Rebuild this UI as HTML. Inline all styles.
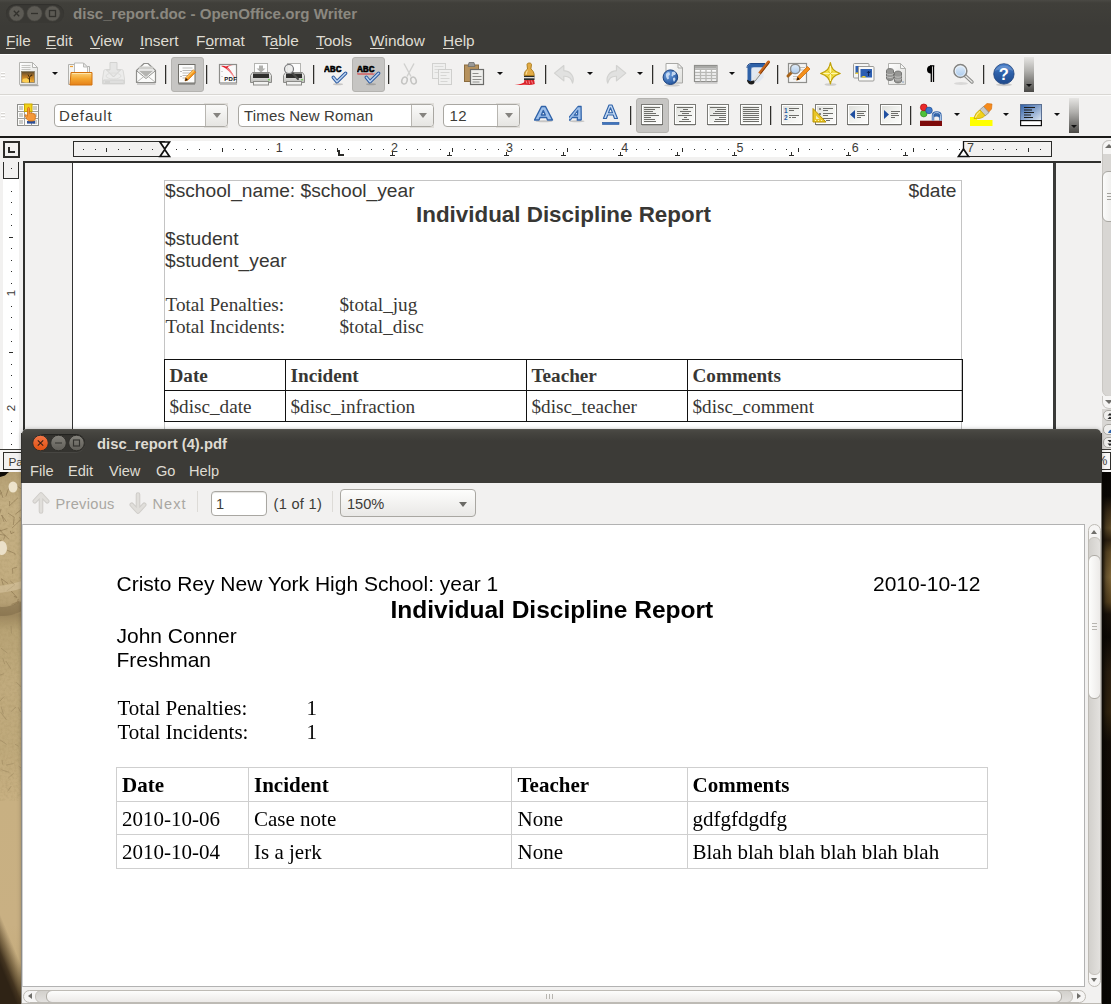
<!DOCTYPE html>
<html>
<head>
<meta charset="utf-8">
<title>disc_report</title>
<style>
*{box-sizing:border-box;margin:0;padding:0}
html,body{width:1111px;height:1004px;overflow:hidden}
body{font-family:"Liberation Sans",sans-serif;position:relative;background:#3a2a17}
.abs{position:absolute}
.nw{white-space:nowrap}
/* ---------- wallpaper ---------- */
#wallL{left:0;top:471px;width:22px;height:533px}
#wallR{left:1102px;top:472px;width:9px;height:532px;background:linear-gradient(90deg,rgba(8,6,3,.85) 0,rgba(8,6,3,.25) 45%,rgba(8,6,3,0) 100%),linear-gradient(180deg,#070503 0,#0a0704 24px,#3d2e18 40px,#5f4b28 56px,#2e2110 68px,#5f4a25 80px,#7f6638 105px,#58431f 130px,#1b130a 142px,#0d0905 165px,#2a1e0f 200px,#33250f 240px,#120c06 270px,#080603 532px)}
/* ---------- writer window ---------- */
#writer{left:0;top:0;width:1111px;height:471px;background:#f2f1f0}
#wtitle{left:0;top:0;width:1111px;height:27px;background:linear-gradient(180deg,#4a4944 0,#403f3a 3px,#3c3b37 100%)}
#wmenu{left:0;top:27px;width:1111px;height:27px;background:#3c3b37}
.wm{top:4px;color:#dfdbd2;font-size:15.4px;line-height:19px}
.wm u{text-decoration-thickness:1px;text-underline-offset:2px}
#tb1{left:0;top:54px;width:1111px;height:40px;background:#f2f1f0;box-shadow:inset 0 1px 0 #fff}
#tb2{left:0;top:94px;width:1111px;height:42px;background:#f2f1f0;box-shadow:inset 0 1px 0 #d9d7d3,inset 0 2px 0 #fbfbfa}
#tbline{left:0;top:136px;width:1111px;height:2px;background:#1a1a18}
.sep{width:1px;height:18px;background:#3c3b37}
.pressed{background:#c6c5c3;border:1px solid #b4b3b0;border-radius:3px}
.dd{width:0;height:0;border-left:3px solid transparent;border-right:3px solid transparent;border-top:3px solid #111}
.combo{height:23px;border:1px solid #a9a7a2;border-radius:4px;background:#fff;top:104px}
.combo .t{position:absolute;left:5px;top:2px;font-size:15px;line-height:18px;color:#3c3b37;white-space:nowrap}
.combo .b{position:absolute;right:0;top:0;width:22px;height:21px;border-left:1px solid #b8b6b1;background:linear-gradient(180deg,#fafaf9,#e6e5e2);border-radius:0 3px 3px 0}
.combo .b i{position:absolute;left:7px;top:8px;width:0;height:0;border-left:4px solid transparent;border-right:4px solid transparent;border-top:5px solid #85837f}
#ruler{left:0;top:0;width:1111px;height:0}
.rn{top:142px;font-size:12.5px;line-height:13px;color:#3c3b37;width:8px;text-align:center;background:transparent}
#wdoc{left:0;top:161px;width:1111px;height:288px;background:#f2f1f0;overflow:hidden}
#wdoc .frameT{left:23px;top:0;width:1078px;height:2px;background:#2f2f2d}
#wdoc .frameL{left:23px;top:0;width:2px;height:290px;background:#2f2f2d}
#wdoc .page{left:72px;top:2px;width:984px;height:288px;background:#fff;border-left:1px solid #333;border-right:3px solid #3a3a38}
#vr{left:3px;top:1px;width:16px;height:289px;background:#fff}
#vr .mb{left:0;top:0;width:16px;height:17px;background:#f2f1f0;border:1px solid #2b2b29;border-top:0}
.wt{color:#383734;white-space:nowrap;position:absolute}
.sans{font-family:"Liberation Sans",sans-serif}
.serif{font-family:"Liberation Serif",serif}
.tf{border:1px solid #c4c4c4}
.bl{background:#111;position:absolute}
#wsb{left:1101px;top:138px;width:10px;height:311px;background:#f2f1f0;overflow:hidden}
#wstatus{left:0;top:449px;width:1111px;height:23px;background:#f7f6f5;box-shadow:inset 0 1px 0 #3c3b37}
/* ---------- pdf window ---------- */
#pdf{left:22px;top:429px;width:1079px;height:575px;background:#f2f1f0;border-radius:5px 5px 0 0;overflow:hidden;box-shadow:0 1px 5px rgba(0,0,0,.38)}
#ptitle{left:0;top:0;width:1079px;height:29px;background:linear-gradient(180deg,#5a5954 0,#4b4a45 1px,#45443f 4px,#3c3b37 12px,#3c3b37 100%);box-shadow:inset 0 -1px 0 #32312d}
#pmenu{left:0;top:28px;width:1079px;height:26px;background:#3c3b37}
.pm{top:5px;color:#dfdbd2;font-size:14.6px;line-height:18px}
#ptool{left:0;top:54px;width:1079px;height:42px;background:#f2f1f0}
.pt{position:absolute;white-space:nowrap;font-size:14.6px;line-height:18px;top:12px}
#pview{filter:grayscale(1);left:0;top:95px;width:1063px;height:463px;background:#fff;border:1px solid #b5b2ab;border-left:1px solid #d4d2cd}
.pp{color:#000;white-space:nowrap;position:absolute}
.gl{background:#cfcfcf;position:absolute}
#pvs{left:1066px;top:95px;width:13px;height:463px;border:1px solid #bebbb5;border-radius:7px;background:#f6f5f4;overflow:hidden}
#phs{left:1px;top:561px;width:1063px;height:13px;border:1px solid #bebbb5;border-radius:7px;background:#f6f5f4;overflow:hidden}
</style>
</head>
<body>
<svg id="wallL" class="abs" width="22" height="533" viewBox="0 0 22 533">
<defs><linearGradient id="wl" x1="0" y1="0" x2="0" y2="1">
<stop offset="0" stop-color="#b39e72"/><stop offset=".06" stop-color="#c4af83"/><stop offset=".2" stop-color="#c3ad80"/><stop offset=".245" stop-color="#b7a176"/><stop offset=".27" stop-color="#9d875e"/><stop offset=".3" stop-color="#b8a375"/><stop offset=".4" stop-color="#c1ab7e"/><stop offset=".52" stop-color="#bfa97b"/><stop offset=".62" stop-color="#c8b082"/><stop offset=".85" stop-color="#c9b083"/><stop offset="1" stop-color="#c2a978"/></linearGradient>
<linearGradient id="wd" gradientUnits="userSpaceOnUse" x1="19.500" y1="489.500" x2="1.500" y2="497"><stop offset="0" stop-color="#5a4830" stop-opacity="0"/><stop offset=".4" stop-color="#564428" stop-opacity=".6"/><stop offset=".75" stop-color="#3d2e1b" stop-opacity=".95"/><stop offset="1" stop-color="#2f2315"/></linearGradient>
<filter id="nz" x="0" y="0" width="100%" height="100%"><feTurbulence type="fractalNoise" baseFrequency=".35" numOctaves="2" seed="3"/><feColorMatrix values="0 0 0 0 .36  0 0 0 0 .27  0 0 0 0 .12  0 0 0 .9 -.36"/></filter></defs>
<rect width="22" height="533" fill="url(#wl)"/>
<rect width="22" height="330" filter="url(#nz)" opacity=".7"/>
<path d="M5.8 25.5L8.5 17.8L9.0 15.9 M-0.6 71.5L-8.9 70.3L-15.0 64.5 M8.2 112.7L1.4 107.7L3.2 114.0 M11.9 57.2L20.4 49.0L25.4 46.1 M1.5 21.2L-2.0 26.9L-6.5 28.0 M13.3 54.0L14.2 46.2L8.0 42.1 M14.3 61.2L11.0 62.7L10.3 59.9 M17.1 96.2L12.5 97.5L12.8 102.8 M15.5 43.1L24.1 36.3L23.0 39.9 M1.6 69.1L-6.6 72.1L-2.9 73.1 M19.0 46.5L22.5 48.2L23.6 47.6 M18.2 127.9L17.7 130.8L11.5 133.6 M13.5 134.1L19.3 130.2L17.7 132.6 M-1.5 65.6L-7.4 58.7L-13.6 62.4 M1.1 37.9L-0.9 44.6L-6.7 43.9 M11.2 120.0L16.9 126.5L13.8 125.3 M6.6 120.1L14.8 113.8L10.3 110.0 M3.6 68.6L5.2 64.3L-1.7 63.2 M6.9 79.1L15.0 82.5L15.2 84.1 M14.2 13.0L21.4 18.0L26.7 22.2 M7.4 57.5L0.3 59.9L-5.8 53.8 M3.0 26.9L0.1 18.9L-6.9 14.0 M0.4 52.9L-8.1 59.6L-6.5 54.7 M4.1 50.8L1.6 44.0L6.5 50.9 M9.2 68.4L1.7 61.3L-0.5 58.0 M17.9 26.8L9.3 34.9L9.7 30.0" stroke="#7a6440" stroke-width=".9" fill="none" opacity=".5"/>
<path d="M11.0 154.9L11.5 162.5 M18.7 275.3L14.9 273.2 M2.0 288.9L2.5 293.4 M5.9 190.1L10.9 197.9 M18.5 295.1L23.6 298.9 M3.4 243.2L1.1 235.6 M-1.3 200.3L-5.2 203.4 M21.0 230.5L27.9 238.3 M20.9 215.6L16.4 211.3 M2.7 186.8L4.7 193.2 M18.2 236.3L20.6 241.1 M0.0 268.9L6.6 273.4 M16.0 236.0L10.9 240.7 M6.0 294.1L13.5 292.5 M7.6 320.4L11.2 315.1 M1.0 177.2L7.5 182.1 M1.5 298.8L9.2 301.3 M6.4 248.8L0.5 241.0 M21.3 266.9L21.7 273.9 M8.4 306.9L13.6 302.3 M4.0 202.7L-0.1 204.1 M4.2 225.4L-1.7 232.0" stroke="#8c7752" stroke-width="1" fill="none" opacity=".4"/>
<path d="M-2 140c8 2 16-1 26-6" stroke="#7f6b48" stroke-width="9" fill="none" opacity=".55"/>
<path d="M-2 118c8 1 16 -2 26 -5" stroke="#d8c7a2" stroke-width="7" fill="none" opacity=".55"/>
<ellipse cx="13" cy="16" rx="4.500" ry="5.500" fill="#efe6d0" opacity=".95"/><ellipse cx="2" cy="77" rx="5" ry="7" fill="#efe6d0" opacity=".9"/>
<path d="M0 0h11c-3 1-4 3-6 4.500l-5 1.500z" fill="#0d0a06"/>
<rect x="0" y="430" width="22" height="103" fill="url(#wd)"/>
</svg>
<div id="wallR" class="abs"></div>

<!-- ================= WRITER WINDOW ================= -->
<div id="writer" class="abs">
  <div id="wtitle" class="abs">
    <div class="abs" style="left:6px;top:4px;width:58px;height:19px;border-radius:9.500px;background:#393834;box-shadow:inset 0 1px 1px rgba(0,0,0,.15)"></div>
    <svg class="abs" style="left:6px;top:4px" width="58" height="20" viewBox="0 0 58 20">
      <g fill="#5c5a54" stroke="#4a4843" stroke-width=".6"><circle cx="10.5" cy="9.5" r="7.5"/><circle cx="28.5" cy="9.5" r="7.5"/><circle cx="46.5" cy="9.5" r="7.5"/></g>
      <g stroke="#32312d" stroke-width="1.3" fill="none"><path d="M7.8 6.8l5.4 5.4M13.2 6.8l-5.4 5.4"/><path d="M25 9.5h7"/><rect x="43.5" y="6.5" width="6" height="6"/></g>
    </svg>
    <div class="abs nw" style="left:73px;top:4px;font-size:15.1px;font-weight:bold;line-height:20px;color:#8b8880">disc_report.doc - OpenOffice.org Writer</div>
  </div>
  <div id="wmenu" class="abs">
    <div class="abs nw wm" style="left:6px"><u>F</u>ile</div>
    <div class="abs nw wm" style="left:46px"><u>E</u>dit</div>
    <div class="abs nw wm" style="left:90px"><u>V</u>iew</div>
    <div class="abs nw wm" style="left:140px"><u>I</u>nsert</div>
    <div class="abs nw wm" style="left:196px">F<u>o</u>rmat</div>
    <div class="abs nw wm" style="left:262px">T<u>a</u>ble</div>
    <div class="abs nw wm" style="left:316px"><u>T</u>ools</div>
    <div class="abs nw wm" style="left:370px"><u>W</u>indow</div>
    <div class="abs nw wm" style="left:443px"><u>H</u>elp</div>
  </div>
  <div id="tb1" class="abs"><!--TB1--><svg width="0" height="0" style="position:absolute"><defs>
<linearGradient id="gPage" x1="0" y1="0" x2="1" y2="1"><stop offset="0" stop-color="#ffffff"/><stop offset="1" stop-color="#dededb"/></linearGradient>
<linearGradient id="gFold" x1="0" y1="0" x2="0" y2="1"><stop offset="0" stop-color="#fbd27a"/><stop offset=".5" stop-color="#f4a630"/><stop offset="1" stop-color="#e5811a"/></linearGradient>
<linearGradient id="gSun" x1="0" y1="0" x2="0" y2="1"><stop offset="0" stop-color="#5b4a30"/><stop offset=".45" stop-color="#b97a26"/><stop offset="1" stop-color="#f7b233"/></linearGradient>
<linearGradient id="gBlue" x1="0" y1="0" x2="0" y2="1"><stop offset="0" stop-color="#5c93d6"/><stop offset="1" stop-color="#1f4f94"/></linearGradient>
<linearGradient id="gEnd" x1="0" y1="0" x2="0" y2="1"><stop offset="0" stop-color="#e3e2e0"/><stop offset=".35" stop-color="#a9a8a5"/><stop offset="1" stop-color="#3e3d3a"/></linearGradient>
<linearGradient id="gPrn" x1="0" y1="0" x2="0" y2="1"><stop offset="0" stop-color="#f4f4f3"/><stop offset="1" stop-color="#bdbdba"/></linearGradient>
<linearGradient id="gHelp" x1="0" y1="0" x2="0" y2="1"><stop offset="0" stop-color="#4a82cf"/><stop offset=".5" stop-color="#2c5ea6"/><stop offset="1" stop-color="#1f4a8c"/></linearGradient>
<radialGradient id="gGlobe" cx=".35" cy=".3" r=".8"><stop offset="0" stop-color="#6ea0e0"/><stop offset="1" stop-color="#1d4e96"/></radialGradient>
<linearGradient id="gLens" x1="0" y1="0" x2="0" y2="1"><stop offset="0" stop-color="#e4effa"/><stop offset="1" stop-color="#a9c9ec"/></linearGradient>
<linearGradient id="gPage2" x1="0" y1="0" x2="1" y2="1"><stop offset="0" stop-color="#dfe0dc"/><stop offset=".5" stop-color="#f1f2ef"/><stop offset="1" stop-color="#fbfbfa"/></linearGradient>
<linearGradient id="gBg" x1="0" y1="0" x2="1" y2="1"><stop offset="0" stop-color="#2f5fa6"/><stop offset="1" stop-color="#dfe8f3"/></linearGradient>
</defs></svg>
<div class="abs" style="left:1px;top:18px;width:4px;height:7px;background:repeating-linear-gradient(180deg,#ffffff 0,#ffffff 1px,#d8d6d2 1px,#d8d6d2 2px,transparent 2px,transparent 3px)"></div>
<svg class="abs" style="left:18px;top:7px" width="22" height="26" viewBox="0 0 22 26" >
<path d="M2 24.500h18.500" stroke="#6f6f6c" stroke-width="1.400" opacity=".55"/>
<path d="M1.500 1.500h13l5 5v17h-18z" fill="url(#gPage)" stroke="#b4b4b1"/>
<path d="M14.500 1.500v5h5z" fill="#fafaf9" stroke="#b4b4b1" stroke-linejoin="round"/>
<path d="M3.500 4.500h9M3.500 6.500h9M3.500 8.500h9" stroke="#c4c4c1" stroke-width="1"/>
<rect x="3.500" y="10.500" width="13" height="11" fill="url(#gSun)" stroke="#8a8068" stroke-width=".8"/>
<ellipse cx="8.500" cy="19.500" rx="4" ry="2.200" fill="#ffd45a" opacity=".9"/>
<path d="M11.500 21.500v-5l-1.500-3M11.500 16.500l2-3M11.500 18.500l-2-1.500M12.800 14.800l1.500-.5" stroke="#3a2810" stroke-width=".9" fill="none"/></svg>
<div class="abs dd" style="left:51.5px;top:18.0px"></div>
<svg class="abs" style="left:67px;top:7px" width="27" height="26" viewBox="0 0 27 26" >
<path d="M1.500 3.500h8l1.500 2h11.500v18h-21z" fill="#f4f4f2" stroke="#b1b1ae"/>
<path d="M3 5.500h3" stroke="#f0a030" stroke-width="1.200"/>
<path d="M7.500 2h9l4 4v16h-13z" fill="#fefefe" stroke="#bbbbb8"/>
<path d="M16.500 2v4h4z" fill="#ececea" stroke="#bbbbb8" stroke-linejoin="round"/>
<path d="M4 11.500h21v12.500h-22z" fill="url(#gFold)" stroke="#d2720e"/>
<path d="M5 12.500h19" stroke="#fde6ad" stroke-width="1"/></svg>
<svg class="abs" style="left:101px;top:7px" width="25" height="25" viewBox="0 0 25 25" >
<path d="M4.500 8.500h16c1 0 1.500 .5 1.700 1.500l1.300 8v5h-22v-5l1.300-8c.2-1 .7-1.500 1.700-1.500z" fill="#ececeb" stroke="#d9d9d7"/>
<path d="M9 1.500h7v7.500h3.500l-7 7-7-7h3.500z" fill="#e6e6e5" stroke="#d3d3d1"/>
<ellipse cx="12.500" cy="15" rx="7.500" ry="3" fill="none" stroke="#dededc" stroke-width="1"/>
<rect x="2" y="19" width="21" height="3.500" rx="1" fill="#dfdfde" stroke="#d2d2d0"/>
<path d="M4 21h5" stroke="#c9c9c7" stroke-width="1"/></svg>
<svg class="abs" style="left:134px;top:7px" width="24" height="24" viewBox="0 0 24 24" >
<path d="M3 23h18.500" stroke="#6f6f6c" stroke-width="1.200" opacity=".45"/>
<path d="M2.500 9.500l7.500-7h4l7.500 7v12h-19z" fill="#fbfbfa" stroke="#8f8f8c" stroke-width="1.200" stroke-linejoin="round"/>
<path d="M4.500 9.500h15l-7.500 6.500z" fill="#b4b4b1"/>
<path d="M5.500 5.500h13l1 3h-15z" fill="#cfcfcc"/>
<path d="M4.500 9h15" stroke="#e9e9e7" stroke-width="1.400"/>
<path d="M3 10l9 7.500 9-7.500" fill="none" stroke="#8f8f8c" stroke-width="1"/>
<path d="M3 21l7.500-6M21 21l-7.500-6" stroke="#b9b9b6" stroke-width="1"/></svg>
<div class="abs" style="left:165px;top:11px;width:1px;height:19px;background:#2f2e2b;box-shadow:1px 0 0 rgba(47,46,43,.25)"></div>
<div class="abs pressed" style="left:171px;top:3px;width:33px;height:35px"></div>
<svg class="abs" style="left:176px;top:8px" width="24" height="24" viewBox="0 0 24 24" >
<path d="M2.500 22h16.500" stroke="#55544f" stroke-width="1.400" opacity=".55"/>
<rect x="2.500" y="2.500" width="16.500" height="18.500" fill="#fcfcfb" stroke="#6f6e69" stroke-width="1"/>
<path d="M6.500 6h10M6.500 8.500h10M6.500 11h8M6.500 13.500h6M6.500 16h5" stroke="#bdbdba" stroke-width="1"/>
<path d="M4.500 9.500h1M4.500 14.500h1" stroke="#777" stroke-width="1"/>
<path d="M17.300 7.800l2.400 2.400-7.700 7.700-3 1 .8-3.200z" fill="#f59a1c" stroke="#d56f06" stroke-width=".8"/>
<path d="M17.300 7.800l1.200 1.200-7.700 7.700-1-.8z" fill="#fbc15a"/>
<path d="M9 19l.8-3.200 2.200 2.200z" fill="#2b1a08"/></svg>
<div class="abs" style="left:206px;top:11px;width:1px;height:19px;background:#2f2e2b;box-shadow:1px 0 0 rgba(47,46,43,.25)"></div>
<svg class="abs" style="left:217px;top:8px" width="23" height="24" viewBox="0 0 23 24" >
<rect x="2.500" y="2.500" width="17" height="18.500" fill="#fafafa" stroke="#8d8d8a" stroke-width="1.200"/>
<path d="M4.500 9.500h1M4.500 14.500h1" stroke="#aaa" stroke-width="1"/>
<path d="M4 4c4 1.500 9 5 13.500 11.500-2.500-5.500-5-8.500-7-10.500 2-1 4-1.700 6.500-2-4 .2-6.500 .8-8 1.500-1.500-.6-3-1-5-.5z" fill="#e2202a"/>
<path d="M10 6c2.500 2.500 5 6 7.500 9.500" stroke="#f6a0a4" stroke-width="1.600" fill="none" opacity=".7"/>
<text x="7.300" y="19.300" font-family="Liberation Sans" font-weight="bold" font-size="6" fill="#111" letter-spacing=".3">PDF</text>
<path d="M3 22.500h17" stroke="#8d8d8a" stroke-width="1" opacity=".5"/></svg>
<svg class="abs" style="left:249px;top:8px" width="24" height="24" viewBox="0 0 24 24" >
<rect x="5.500" y="1.500" width="13" height="10" fill="#fdfdfd" stroke="#b4b4b1"/>
<path d="M10 3.500h4v3h2.500l-4.500 4-4.500-4h2.500z" fill="#b0b0ad"/>
<path d="M3.500 10.500h17l2 3v7h-21v-7z" fill="url(#gPrn)" stroke="#8b8b88"/>
<rect x="4" y="11.500" width="16" height="4.500" fill="#2f2f2d"/>
<rect x="4.500" y="19.500" width="15" height="3.500" fill="#f1f1f0" stroke="#8b8b88"/>
<rect x="19.300" y="17" width="1.400" height="1.400" fill="#5fd13c"/></svg>
<svg class="abs" style="left:282px;top:8px" width="24" height="24" viewBox="0 0 24 24" >
<rect x="5.500" y="1.500" width="13" height="10" fill="#fdfdfd" stroke="#b4b4b1"/>
<path d="M3.500 10.500h17l2 3v7h-21v-7z" fill="url(#gPrn)" stroke="#8b8b88"/>
<rect x="4" y="11.500" width="16" height="4.500" fill="#2f2f2d"/>
<rect x="4.500" y="19.500" width="15" height="3.500" fill="#f1f1f0" stroke="#8b8b88"/>
<rect x="19.300" y="17" width="1.400" height="1.400" fill="#5fd13c"/>
<path d="M9.500 10l6.500 7" stroke="#4b4b49" stroke-width="2" stroke-linecap="round"/>
<circle cx="7" cy="7" r="4.500" fill="#ebebea" fill-opacity=".9" stroke="#77777a" stroke-width="1.200"/></svg>
<div class="abs" style="left:313px;top:11px;width:1px;height:19px;background:#2f2e2b;box-shadow:1px 0 0 rgba(47,46,43,.25)"></div>
<svg class="abs" style="left:324px;top:7px" width="24" height="25" viewBox="0 0 24 25" ><text x="0" y="10.800" font-family="Liberation Mono" font-weight="bold" font-size="9.800" fill="#000" textLength="17.500" lengthAdjust="spacingAndGlyphs" stroke="#000" stroke-width=".5">ABC</text><path d="M9.300 16.300l3.700 4.500 8.600-8.600" fill="none" stroke="#2c5aa0" stroke-width="3.400" stroke-linecap="round" stroke-linejoin="round"/><path d="M9.300 16.300l3.700 4.500 8.600-8.600" fill="none" stroke="#bcd4f1" stroke-width="1.500" stroke-linecap="round" stroke-linejoin="round"/><ellipse cx="14" cy="23.300" rx="5" ry="1" fill="#000" opacity=".18"/></svg>
<div class="abs pressed" style="left:352px;top:3px;width:33px;height:35px"></div>
<svg class="abs" style="left:357px;top:7px" width="24" height="25" viewBox="0 0 24 25" ><text x="0" y="10.800" font-family="Liberation Mono" font-weight="bold" font-size="9.800" fill="#000" textLength="17.500" lengthAdjust="spacingAndGlyphs" stroke="#000" stroke-width=".5">ABC</text><path d="M0 13.500l1-1 1 1 1-1 1 1 1-1 1 1 1-1 1 1 1-1 1 1 1-1 1 1 1-1 1 1 1-1 1 1 1-1" stroke="#e0141c" stroke-width="1" fill="none"/><path d="M9.300 16.300l3.700 4.500 8.600-8.600" fill="none" stroke="#2c5aa0" stroke-width="3.400" stroke-linecap="round" stroke-linejoin="round"/><path d="M9.300 16.300l3.700 4.500 8.600-8.600" fill="none" stroke="#bcd4f1" stroke-width="1.500" stroke-linecap="round" stroke-linejoin="round"/><ellipse cx="14" cy="23.300" rx="5" ry="1" fill="#000" opacity=".18"/></svg>
<div class="abs" style="left:388px;top:11px;width:1px;height:19px;background:#2f2e2b;box-shadow:1px 0 0 rgba(47,46,43,.25)"></div>
<svg class="abs" style="left:399px;top:7px" width="20" height="26" viewBox="0 0 20 26" >
<path d="M5 2.500l7 13M15 2.500l-7 13" stroke="#d0d0ce" stroke-width="1.400" fill="none"/>
<ellipse cx="5.500" cy="19.500" rx="2.600" ry="3.600" fill="none" stroke="#c4c4c2" stroke-width="1.500" transform="rotate(20 5.500 19.500)"/>
<ellipse cx="14.500" cy="19.500" rx="2.600" ry="3.600" fill="none" stroke="#c4c4c2" stroke-width="1.500" transform="rotate(-20 14.500 19.500)"/></svg>
<svg class="abs" style="left:430px;top:7px" width="24" height="26" viewBox="0 0 24 26" >
<rect x="2.500" y="2.500" width="13" height="15" fill="#efefee" stroke="#d2d2d0"/>
<path d="M4.500 5.500h9M4.500 8.500h9M4.500 11.500h9" stroke="#dadad8"/>
<rect x="8.500" y="8.500" width="13" height="15" fill="#f0f0ef" stroke="#cfcfcd"/>
<path d="M10.500 11.500h9M10.500 14.500h6M10.500 17.500h9M10.500 20.500h7" stroke="#d6d6d4"/></svg>
<svg class="abs" style="left:462px;top:7px" width="24" height="26" viewBox="0 0 24 26" >
<rect x="2.500" y="4" width="14" height="16.500" fill="#b6925e" stroke="#8b6c3e"/>
<path d="M7 1.500h5l1 4h-7z" fill="#9a9a98" stroke="#6e6e6c" stroke-width=".8"/>
<rect x="8.500" y="8.500" width="13" height="15" fill="#eeeeec" stroke="#6b6b69" stroke-width="1.200"/>
<path d="M10.500 12.500h6M10.500 15.500h9M10.500 18.500h9M10.500 21h7" stroke="#8e8e8c" stroke-width="1.200"/></svg>
<div class="abs dd" style="left:496.5px;top:18.0px"></div>
<svg class="abs" style="left:512px;top:7px" width="26" height="26" viewBox="0 0 26 26" >
<path d="M2.500 24c5-.5 9-1.500 12-4l8 .5c-3 2.500-10 4-20 3.500z" fill="#e51c23"/>
<path d="M12.500 18.500h9.500l.8 4.500c-4 1.500-8 1.300-11 0z" fill="#d8222a"/>
<path d="M14 19.500l1 3M17 19.500l.5 3.500M19.500 19.500l1 3" stroke="#f7a3a6" stroke-width=".8"/>
<rect x="12" y="14.500" width="10.500" height="4.500" fill="#2a2a28"/>
<path d="M12 16.700h10.500" stroke="#f2f2f0" stroke-width="1.200"/>
<path d="M15 3.500c0-2 4.500-2 4.500 0l-.6 4.500c2 1.500 3.300 3.500 3.300 6.500h-10c0-3 1.300-5 3.300-6.500z" fill="#e2ab45" stroke="#a87818" stroke-width=".9"/>
<path d="M15.500 9.500c-.8 1-1.300 2.500-1.300 4" stroke="#f8dc98" stroke-width="1.200" fill="none"/></svg>
<div class="abs" style="left:545px;top:11px;width:1px;height:19px;background:#2f2e2b;box-shadow:1px 0 0 rgba(47,46,43,.25)"></div>
<svg class="abs" style="left:553px;top:9px" width="24" height="22" viewBox="0 0 24 22" ><g transform="translate(.3 .3) scale(1.17 1.1)"><path d="M9 2l-8 7 8 7v-4.200c4-.3 6.500 1.800 7.500 6.200 1.800-5-1-10.800-7.500-11.300z" fill="#e1e1e0" stroke="#d2d2d0" stroke-width="1" stroke-linejoin="round"/></g></svg>
<div class="abs dd" style="left:587.4px;top:18.0px"></div>
<svg class="abs" style="left:604px;top:9px" width="24" height="22" viewBox="0 0 24 22" ><g transform="translate(23 .3) scale(-1.17 1.1)"><path d="M9 2l-8 7 8 7v-4.200c4-.3 6.500 1.800 7.500 6.200 1.800-5-1-10.800-7.500-11.300z" fill="#e1e1e0" stroke="#d2d2d0" stroke-width="1" stroke-linejoin="round"/></g></svg>
<div class="abs dd" style="left:637.2px;top:18.0px"></div>
<div class="abs" style="left:652px;top:11px;width:1px;height:19px;background:#2f2e2b;box-shadow:1px 0 0 rgba(47,46,43,.25)"></div>
<svg class="abs" style="left:661px;top:7px" width="24" height="26" viewBox="0 0 24 26" >
<path d="M5 2.500h12l4.500 4.500v15h-16.500z" fill="url(#gPage)" stroke="#a9a9a6"/>
<path d="M17 2.500v4.500h4.500z" fill="#f7f7f6" stroke="#a9a9a6" stroke-linejoin="round"/>
<ellipse cx="11" cy="24.300" rx="8" ry="1.200" fill="#000" opacity=".15"/>
<circle cx="9.400" cy="16.200" r="7.300" fill="url(#gGlobe)" stroke="#1b4280" stroke-width="1"/>
<path d="M5 13c1-1.500 2.500-2 3.500-1.500l.5 2-1.500 1.500.5 2.500-1.500 1c-1-1.500-2-3.500-1.500-5.500zM11 11l2.500-.5 1.500 2-1 1.500h-1.500l-.5 1.500-1.500-.5zM12 17l2-.5.500 2-1.500 2.500-1-2z" fill="#cfe0f5" opacity=".9"/></svg>
<svg class="abs" style="left:693px;top:10px" width="26" height="20" viewBox="0 0 26 20" >
<rect x="1.500" y="1.500" width="22.500" height="16" fill="#fdfdfd" stroke="#8f8f8c" stroke-width="1.200"/>
<rect x="2" y="2" width="21.500" height="2.600" fill="#a9a9a6"/>
<path d="M2 5.300h21.500M2 8.500h21.500M2 11.500h21.500M2 14.500h21.500M7.500 5v12.500M13 5v12.500M18.500 5v12.500" stroke="#b9b9b6" stroke-width="1.300"/>
<path d="M2 19h22.500" stroke="#777" stroke-width="1" opacity=".5"/></svg>
<div class="abs dd" style="left:728.6px;top:18.0px"></div>
<svg class="abs" style="left:744px;top:6px" width="27" height="27" viewBox="0 0 27 27" >
<path d="M7 4h14.500v3.500h-11.500c-1.500 0-2.500 1-2.500 2.500v11.500h-4v-13.500c0-2.500 1.500-4 3.500-4z" fill="#2f62a8"/>
<path d="M3 8c0-2.500 1.500-4.500 4-4.500h14" fill="none" stroke="#1d4686" stroke-width="1"/>
<path d="M7.500 7.500h12v10l-5 5h-7z" fill="#dfe7f1" opacity=".9"/>
<path d="M24.500 2l-9 11.500" stroke="#c8651a" stroke-width="3" stroke-linecap="round"/>
<path d="M25.300 2.500l-8.500 11" stroke="#7a3d0f" stroke-width="1"/>
<path d="M15.500 13.500l-5.500 7" stroke="#e3e3e1" stroke-width="3.200"/>
<path d="M16.500 14.200l-5.500 7" stroke="#8a8a88" stroke-width="1"/>
<path d="M10.500 20.500c-2 0-3.500 1-5 .5-1.500-.4-2-1.500-2.500-1 .2 2.500 2 4.500 4.500 4.500 2.200 0 3.500-1.500 3-4z" fill="#1c1c1b"/></svg>
<div class="abs" style="left:777px;top:11px;width:1px;height:19px;background:#2f2e2b;box-shadow:1px 0 0 rgba(47,46,43,.25)"></div>
<svg class="abs" style="left:785px;top:7px" width="27" height="24" viewBox="0 0 27 24" >
<rect x="3.500" y="2.500" width="18" height="19" fill="#f6f6f5" stroke="#8f8f8c" stroke-width="1.200"/>
<path d="M14 6.500h6M14 9h6M8 15.500h8M8 18h6" stroke="#c2c2bf" stroke-width="1"/>
<path d="M7 11l-4 4" stroke="#a8641a" stroke-width="3" stroke-linecap="round"/>
<circle cx="10.200" cy="7.900" r="4.700" fill="url(#gLens)" stroke="#8d8d8a" stroke-width="1.400"/>
<path d="M22.500 5.500l2.500 2.500-10 10-3.300 1.200 1-3.500z" fill="#f4901a" stroke="#d16a06" stroke-width=".8"/>
<path d="M11.700 19.200l1-3.200 2.200 2.200z" fill="#2b1a08"/></svg>
<svg class="abs" style="left:818px;top:7px" width="25" height="26" viewBox="0 0 25 26" >
<ellipse cx="12.500" cy="23.500" rx="6" ry="1.300" fill="#000" opacity=".15"/>
<path d="M12.400 1.500c1 6 3 8.800 9.800 11-6.800 2.200-8.800 5-9.800 10.300-1-5.300-3-8.100-9.800-10.300 6.800-2.200 8.800-5 9.800-11z" fill="#f4e04a" stroke="#bfa008" stroke-width="1.200" stroke-linejoin="round"/>
<path d="M12.400 5v15M5.500 12.500h14" stroke="#fff7b0" stroke-width="1.200"/>
<path d="M12.400 12.500l3-3M12.400 12.500l-3 3M12.400 12.500l3 3M12.400 12.500l-3-3" stroke="#d8bc20" stroke-width=".8"/></svg>
<svg class="abs" style="left:851px;top:7px" width="25" height="22" viewBox="0 0 25 22" >
<rect x="2.500" y="2.500" width="15.500" height="14.500" rx="1" fill="#f5f5f4" stroke="#9a9a97"/>
<rect x="4.500" y="5" width="6" height="8" fill="#2d5fb2"/>
<path d="M4.500 11.500h4v1.500h-4z" fill="#f0d030"/>
<rect x="7.500" y="5.500" width="15.500" height="14.500" rx="1" fill="#f9f9f8" stroke="#9a9a97"/>
<rect x="9.500" y="8" width="11.500" height="8.500" fill="#2d5fb2"/>
<path d="M10 16.500c1.500-2 4-2 5.500 0z" fill="#f5d52a"/>
<path d="M17.500 15v-5M15.800 11.300h3.500M17.500 12.500l1.700-2" stroke="#0f2350" stroke-width=".9"/></svg>
<svg class="abs" style="left:885px;top:7px" width="23" height="25" viewBox="0 0 23 25" >
<path d="M3.500 2.500h12l5 5v16h-17z" fill="url(#gPage)" stroke="#b0b0ad"/>
<path d="M15.500 2.500v5h5z" fill="#f7f7f6" stroke="#b0b0ad" stroke-linejoin="round"/>
<g fill="#979795" stroke="#6c6c6a" stroke-width=".9">
<path d="M1.500 9.500c0-2.500 7-2.500 7 0v8c0 2.500-7 2.500-7 0z"/><path d="M9.500 12c0-2.500 7-2.500 7 0v8c0 2.500-7 2.500-7 0z"/></g>
<path d="M1.500 12.200c0 2 7 2 7 0M1.500 15c0 2 7 2 7 0M9.500 14.700c0 2 7 2 7 0M9.500 17.500c0 2 7 2 7 0" fill="none" stroke="#c6c6c4" stroke-width=".9"/>
<rect x="17.500" y="20.500" width="1" height="1" fill="#3465a4"/></svg>
<svg class="abs" style="left:925px;top:10px" width="12" height="20" viewBox="0 0 12 20" ><path d="M8.500 2v16M6.300 2v16" stroke="#000" stroke-width="1.300"/><path d="M6.500 1.800h-1.300c-4.300 0-4.300 7.600 0 7.600h1.300z" fill="#000"/><path d="M5 1.800h4.300" stroke="#000" stroke-width="1.200"/></svg>
<svg class="abs" style="left:950px;top:7px" width="26" height="26" viewBox="0 0 26 26" >
<ellipse cx="11" cy="22.500" rx="7" ry="1.500" fill="#000" opacity=".1"/>
<path d="M15 14.500l7 6.500" stroke="#8a8a88" stroke-width="3.400" stroke-linecap="round"/>
<path d="M15 14.500l7 6.500" stroke="#e8e8e6" stroke-width="1.400" stroke-linecap="round"/>
<circle cx="10.400" cy="10" r="6.400" fill="url(#gLens)" stroke="#858583" stroke-width="1.600"/>
<circle cx="10.400" cy="10" r="5.200" fill="none" stroke="#fff" stroke-width=".8" opacity=".8"/></svg>
<div class="abs" style="left:983px;top:11px;width:1px;height:19px;background:#2f2e2b;box-shadow:1px 0 0 rgba(47,46,43,.25)"></div>
<svg class="abs" style="left:992px;top:7px" width="24" height="26" viewBox="0 0 24 26" >
<ellipse cx="12" cy="23.800" rx="8" ry="1.500" fill="#000" opacity=".15"/>
<circle cx="11.900" cy="12.900" r="10.200" fill="url(#gHelp)" stroke="#1b3f7a" stroke-width=".8"/>
<path d="M2.500 10c3-7 16-7 19 0-6-2.500-13-2.500-19 0z" fill="#fff" opacity=".18"/>
<text x="11.900" y="18.600" text-anchor="middle" font-family="Liberation Sans" font-weight="bold" font-size="16.500" fill="#fff">?</text></svg>
<div class="abs" style="left:1024px;top:3px;width:10px;height:35px;background:linear-gradient(180deg,#e6e5e3 0,#b1b0ad 40%,#4a4946 100%)"></div>
<div class="abs dd" style="left:1026px;top:30px"></div><!--/TB1--></div>
  <div id="tb2" class="abs"><!--TB2--><div class="abs" style="left:1px;top:18px;width:4px;height:7px;background:repeating-linear-gradient(180deg,#ffffff 0,#ffffff 1px,#d8d6d2 1px,#d8d6d2 2px,transparent 2px,transparent 3px)"></div>
<svg class="abs" style="left:16px;top:9px" width="24" height="24" viewBox="0 0 24 24" >
<rect x="1.500" y="1.500" width="21" height="21" fill="#fcfcfb" stroke="#8e8e8b"/>
<path d="M8.500 1.500v21M15.500 1.500v21M1.500 8.500h21M1.500 15.500h21" stroke="#9e9e9b" stroke-width="1"/>
<g fill="#cbcbc7"><rect x="3" y="3" width="4" height="4"/><rect x="17" y="3" width="4" height="4"/><rect x="3" y="10" width="4" height="4"/><rect x="17" y="10" width="4" height="4"/><rect x="3" y="17" width="4" height="4"/><rect x="17" y="17" width="4" height="4"/></g>
<rect x="8.500" y="1" width="7.500" height="7.500" fill="#f2d21c" stroke="#c9a800"/>
<rect x="11" y="18" width="8" height="2.600" fill="#2a4f9a"/>
<path d="M11.500 5.500c0-1.500 2-1.500 2 0v5l1-.7c.6-.3 1.200 0 1.200.7l1-.3c.6 0 1 .3 1 1l.8 0c.6 0 .8.500.8 1v3.300c0 1.700-1.300 2.500-3 2.500h-2.500c-1.500 0-2.300-.8-3.300-2.500l-1.500-2.700c-.4-.9.600-1.500 1.300-.8l1.200 1.200z" fill="#f4983a" stroke="#d36d0c" stroke-width=".8"/></svg>
<div class="abs" style="left:204px;top:9px;width:24px;height:25px;background:#e0deda"></div><div class="abs combo" style="left:54px;top:10px;width:174px"><div class="t" style="left:4px;letter-spacing:0.85px">Default</div><div class="b"><i></i></div></div>
<div class="abs" style="left:410px;top:9px;width:24px;height:25px;background:#e0deda"></div><div class="abs combo" style="left:238px;top:10px;width:196px"><div class="t" style="left:5px;letter-spacing:0.15px">Times New Roman</div><div class="b"><i></i></div></div>
<div class="abs" style="left:496px;top:9px;width:24px;height:25px;background:#e0deda"></div><div class="abs combo" style="left:443px;top:10px;width:77px"><div class="t" style="left:5.5px;letter-spacing:0.3px">12</div><div class="b"><i></i></div></div>
<svg class="abs" style="left:534px;top:11px" width="21" height="18" viewBox="0 0 21 18" ><ellipse cx="10" cy="16.300" rx="8.500" ry="1" fill="#000" opacity=".18"/><path d="M7.500 1.500h4l7 13.500h-5l-1-2.500h-6.500l-1 2.500h-4.500zM9.300 5.500l-2 4.500h4z" fill="#9dbfea" stroke="#2f62a8" stroke-width="1.400" stroke-linejoin="round" fill-rule="evenodd"/></svg>
<svg class="abs" style="left:569px;top:11px" width="21" height="18" viewBox="0 0 21 18" ><ellipse cx="8" cy="16.300" rx="7.500" ry="1" fill="#000" opacity=".18"/><g transform="translate(3.500 0) skewX(-22) scale(.8 1)"><path d="M7.500 1.500h4l7 13.500h-5l-1-2.500h-6.500l-1 2.500h-4.500zM9.300 5.500l-2 4.500h4z" fill="#9dbfea" stroke="#2f62a8" stroke-width="1.400" stroke-linejoin="round" fill-rule="evenodd"/></g></svg>
<svg class="abs" style="left:601px;top:10px" width="20" height="22" viewBox="0 0 20 22" ><path d="M8 1h3l5.500 13.500h-3l-1.300-3.500h-5.500l-1.300 3.500h-3zM9.500 3.800l-2 5h4z" fill="#c2d8f2" stroke="#2f62a8" stroke-width="1.100" stroke-linejoin="round" fill-rule="evenodd"/><rect x="1.500" y="18.300" width="16.500" height="2.200" fill="#3f74bd" stroke="#2a5aa0" stroke-width=".6"/></svg>
<div class="abs" style="left:630px;top:12px;width:1px;height:19px;background:#2f2e2b;box-shadow:1px 0 0 rgba(47,46,43,.25)"></div>
<div class="abs pressed" style="left:636px;top:4px;width:33px;height:35px"></div>
<svg class="abs" style="left:641px;top:10px" width="22" height="22" viewBox="0 0 22 22" shape-rendering="crispEdges"><rect x="0.500" y="0.500" width="21" height="20" fill="#fff" stroke="#7b7b77" stroke-width="1"/><rect x="2" y="2" width="18" height="17" fill="url(#gPage2)"/><rect x="0" y="20" width="22" height="1" fill="#6f6f6b"/><rect x="1" y="21" width="20" height="1" fill="#000" opacity=".12"/><rect x="3" y="3" width="16" height="1" fill="#6e6e6a"/><rect x="3" y="5" width="11" height="1" fill="#6e6e6a"/><rect x="3" y="7" width="9" height="1" fill="#6e6e6a"/><rect x="3" y="9" width="12" height="1" fill="#6e6e6a"/><rect x="3" y="11" width="15" height="1" fill="#6e6e6a"/><rect x="3" y="13" width="7" height="1" fill="#6e6e6a"/><rect x="3" y="15" width="11" height="1" fill="#6e6e6a"/><rect x="3" y="17" width="12" height="1" fill="#6e6e6a"/></svg>
<svg class="abs" style="left:674px;top:10px" width="22" height="22" viewBox="0 0 22 22" shape-rendering="crispEdges"><rect x="0.500" y="0.500" width="21" height="20" fill="#fff" stroke="#7b7b77" stroke-width="1"/><rect x="2" y="2" width="18" height="17" fill="url(#gPage2)"/><rect x="0" y="20" width="22" height="1" fill="#6f6f6b"/><rect x="1" y="21" width="20" height="1" fill="#000" opacity=".12"/><rect x="3" y="3" width="16" height="1" fill="#6e6e6a"/><rect x="9" y="5" width="5" height="1" fill="#6e6e6a"/><rect x="6" y="7" width="11" height="1" fill="#6e6e6a"/><rect x="8" y="9" width="7" height="1" fill="#6e6e6a"/><rect x="4" y="11" width="14" height="1" fill="#6e6e6a"/><rect x="10" y="13" width="3" height="1" fill="#6e6e6a"/><rect x="8" y="15" width="7" height="1" fill="#6e6e6a"/><rect x="5" y="17" width="12" height="1" fill="#6e6e6a"/></svg>
<svg class="abs" style="left:707px;top:10px" width="22" height="22" viewBox="0 0 22 22" shape-rendering="crispEdges"><rect x="0.500" y="0.500" width="21" height="20" fill="#fff" stroke="#7b7b77" stroke-width="1"/><rect x="2" y="2" width="18" height="17" fill="url(#gPage2)"/><rect x="0" y="20" width="22" height="1" fill="#6f6f6b"/><rect x="1" y="21" width="20" height="1" fill="#000" opacity=".12"/><rect x="3" y="3" width="16" height="1" fill="#6e6e6a"/><rect x="10" y="5" width="9" height="1" fill="#6e6e6a"/><rect x="8" y="7" width="11" height="1" fill="#6e6e6a"/><rect x="6" y="9" width="13" height="1" fill="#6e6e6a"/><rect x="3" y="11" width="16" height="1" fill="#6e6e6a"/><rect x="12" y="13" width="7" height="1" fill="#6e6e6a"/><rect x="8" y="15" width="11" height="1" fill="#6e6e6a"/><rect x="7" y="17" width="12" height="1" fill="#6e6e6a"/></svg>
<svg class="abs" style="left:740px;top:10px" width="22" height="22" viewBox="0 0 22 22" shape-rendering="crispEdges"><rect x="0.500" y="0.500" width="21" height="20" fill="#fff" stroke="#7b7b77" stroke-width="1"/><rect x="2" y="2" width="18" height="17" fill="url(#gPage2)"/><rect x="0" y="20" width="22" height="1" fill="#6f6f6b"/><rect x="1" y="21" width="20" height="1" fill="#000" opacity=".12"/><rect x="3" y="3" width="16" height="1" fill="#6e6e6a"/><rect x="3" y="5" width="16" height="1" fill="#6e6e6a"/><rect x="3" y="7" width="16" height="1" fill="#6e6e6a"/><rect x="3" y="9" width="16" height="1" fill="#6e6e6a"/><rect x="3" y="11" width="16" height="1" fill="#6e6e6a"/><rect x="3" y="13" width="16" height="1" fill="#6e6e6a"/><rect x="3" y="15" width="16" height="1" fill="#6e6e6a"/><rect x="3" y="17" width="16" height="1" fill="#6e6e6a"/></svg>
<div class="abs" style="left:770px;top:12px;width:1px;height:19px;background:#2f2e2b;box-shadow:1px 0 0 rgba(47,46,43,.25)"></div>
<svg class="abs" style="left:781px;top:10px" width="22" height="22" viewBox="0 0 22 22" shape-rendering="crispEdges"><rect x="0.500" y="0.500" width="21" height="20" fill="#fff" stroke="#7b7b77" stroke-width="1"/><rect x="2" y="2" width="18" height="17" fill="url(#gPage2)"/><rect x="0" y="20" width="22" height="1" fill="#6f6f6b"/><rect x="1" y="21" width="20" height="1" fill="#000" opacity=".12"/><rect x="8" y="4" width="10" height="1" fill="#6e6e6a"/><rect x="8" y="6" width="5" height="1" fill="#6e6e6a"/><rect x="8" y="11" width="10" height="1" fill="#6e6e6a"/><rect x="8" y="13" width="2" height="1" fill="#6e6e6a"/><rect x="11" y="13" width="4" height="1" fill="#6e6e6a"/><g shape-rendering="geometricPrecision"><text x="3" y="8.500" font-family="Liberation Sans" font-weight="bold" font-size="6.500" fill="#2a5aa0">1</text><text x="3" y="15.500" font-family="Liberation Sans" font-weight="bold" font-size="6.500" fill="#2a5aa0">2</text></g></svg>
<svg class="abs" style="left:815px;top:10px" width="22" height="22" viewBox="0 0 22 22" shape-rendering="crispEdges"><rect x="0.500" y="0.500" width="21" height="20" fill="#fff" stroke="#7b7b77" stroke-width="1"/><rect x="2" y="2" width="18" height="17" fill="url(#gPage2)"/><rect x="0" y="20" width="22" height="1" fill="#6f6f6b"/><rect x="1" y="21" width="20" height="1" fill="#000" opacity=".12"/><rect x="8" y="4" width="10" height="1" fill="#6e6e6a"/><rect x="8" y="6" width="5" height="1" fill="#6e6e6a"/><rect x="8" y="9" width="10" height="1" fill="#6e6e6a"/><rect x="8" y="11" width="5" height="1" fill="#6e6e6a"/><rect x="8" y="14" width="10" height="1" fill="#6e6e6a"/><rect x="11" y="16" width="4" height="1" fill="#6e6e6a"/><rect x="4" y="4" width="2" height="2" fill="#888"/><rect x="4" y="9" width="2" height="2" fill="#888"/></svg>
<svg class="abs" style="left:812px;top:13px" width="16" height="16" viewBox="0 0 16 16" ><path d="M1 1.500v13.500h13z" fill="#e9c526" stroke="#b89200" stroke-width="1"/><path d="M4 8.500v3.500h3.500z" fill="#f6eebc"/><path d="M3 13.500h1M6 13.500h1M9 13.500h1" stroke="#fff5b0" stroke-width="1"/></svg>
<svg class="abs" style="left:847px;top:10px" width="22" height="22" viewBox="0 0 22 22" shape-rendering="crispEdges"><rect x="0.500" y="0.500" width="21" height="20" fill="#fff" stroke="#7b7b77" stroke-width="1"/><rect x="2" y="2" width="18" height="17" fill="url(#gPage2)"/><rect x="0" y="20" width="22" height="1" fill="#6f6f6b"/><rect x="1" y="21" width="20" height="1" fill="#000" opacity=".12"/><rect x="10" y="7" width="9" height="1" fill="#6e6e6a"/><rect x="10" y="9" width="7" height="1" fill="#6e6e6a"/><rect x="10" y="11" width="8" height="1" fill="#6e6e6a"/><rect x="10" y="13" width="4" height="1" fill="#6e6e6a"/><path d="M8 6v9l-5-4.500z" fill="#1f4fa0" shape-rendering="geometricPrecision"/></svg>
<svg class="abs" style="left:880px;top:10px" width="22" height="22" viewBox="0 0 22 22" shape-rendering="crispEdges"><rect x="0.500" y="0.500" width="21" height="20" fill="#fff" stroke="#7b7b77" stroke-width="1"/><rect x="2" y="2" width="18" height="17" fill="url(#gPage2)"/><rect x="0" y="20" width="22" height="1" fill="#6f6f6b"/><rect x="1" y="21" width="20" height="1" fill="#000" opacity=".12"/><rect x="11" y="7" width="9" height="1" fill="#6e6e6a"/><rect x="11" y="9" width="7" height="1" fill="#6e6e6a"/><rect x="11" y="11" width="8" height="1" fill="#6e6e6a"/><rect x="11" y="13" width="4" height="1" fill="#6e6e6a"/><path d="M4 6v9l5-4.500z" fill="#1f4fa0" shape-rendering="geometricPrecision"/></svg>
<div class="abs" style="left:910px;top:12px;width:1px;height:19px;background:#2f2e2b;box-shadow:1px 0 0 rgba(47,46,43,.25)"></div>
<svg class="abs" style="left:919px;top:9px" width="24" height="24" viewBox="0 0 24 24" >
<rect x="1" y="17.700" width="22" height="5.300" fill="#7d0a0a"/>
<path d="M14 17.500v-5c0-4 7.500-4 7.500 0v5M14 14.500c0-3 7-3 7 0" fill="none" stroke="#2f62a8" stroke-width="2.400"/>
<path d="M14 17.500v-5c0-4 7.500-4 7.500 0v5" fill="none" stroke="#cfe0f5" stroke-width=".8"/>
<circle cx="4.800" cy="10.600" r="3.300" fill="#4fc23a" stroke="#2c8a1c" stroke-width=".7"/>
<circle cx="4.800" cy="4.400" r="3.400" fill="#ea2a2a" stroke="#a80e0e" stroke-width=".7"/>
<circle cx="10" cy="7.400" r="3.300" fill="#3f78c9" stroke="#1f4f94" stroke-width=".7"/></svg>
<div class="abs dd" style="left:953.5px;top:19.0px"></div>
<svg class="abs" style="left:969px;top:8px" width="24" height="25" viewBox="0 0 24 25" >
<path d="M1 15h7v3h15.500v6h-22.500z" fill="#ffff00"/>
<path d="M14 5l4-3.500 5 .5-.5 5-3.500 4z" fill="#f58a1c" stroke="#d46a06" stroke-width=".6"/>
<path d="M10.500 8l4-3.500 5.500 6-4 3.500z" fill="#c9c9c7" stroke="#8a8a88" stroke-width=".8"/>
<path d="M5 16.500c1-4 3-7 6-8.500l5 5.500c-2 2.500-5.500 3.500-11 3z" fill="#f2d21c" stroke="#c9a800" stroke-width=".8"/>
<path d="M6.500 15.500c1-2.500 2.500-4.500 4.500-6" stroke="#fff7b0" stroke-width="1" fill="none"/></svg>
<div class="abs dd" style="left:1003.4px;top:19.0px"></div>
<svg class="abs" style="left:1019px;top:9px" width="24" height="24" viewBox="0 0 24 24" >
<rect x="1.500" y="1.500" width="21" height="16" fill="url(#gBg)" stroke="#5a6f92" stroke-width="1"/>
<path d="M5 4.500h11M5 7h8M5 9.500h10M5 12h7M5 14.500h9" stroke="#1b1b1a" stroke-width="1.100"/>
<rect x="1.600" y="17.600" width="20.800" height="5" fill="#fff" stroke="#111" stroke-width="1.200"/></svg>
<div class="abs dd" style="left:1053.7px;top:19.0px"></div>
<div class="abs" style="left:1069px;top:4px;width:10px;height:35px;background:linear-gradient(180deg,#e6e5e3 0,#b1b0ad 40%,#4a4946 100%)"></div>
<div class="abs dd" style="left:1071px;top:31px"></div><!--/TB2--></div>
  <div id="tbline" class="abs"></div>
  <div id="ruler" class="abs"><svg class="abs" style="left:0;top:138px" width="1111" height="23" viewBox="0 0 1111 23" shape-rendering="crispEdges">
<rect x="0" y="0" width="1111" height="23" fill="#f2f1f0"/>
<rect x="4" y="4" width="15" height="15" fill="#f2f1f0" stroke="#2b2b29" stroke-width="2"/>
<path d="M9 9v5h6" fill="none" stroke="#2b2b29" stroke-width="2"/>
<rect x="165" y="3" width="798" height="16" fill="#ffffff"/>
<rect x="73.5" y="3.5" width="91" height="15" fill="#f2f1f0" stroke="#2b2b29" stroke-width="1"/>
<rect x="963.5" y="3.5" width="88" height="15" fill="#f2f1f0" stroke="#2b2b29" stroke-width="1"/>
<rect x="83" y="11" width="1" height="1" fill="#2b2b29"/>
<rect x="95" y="11" width="1" height="1" fill="#2b2b29"/>
<rect x="106" y="10" width="1" height="4" fill="#2b2b29"/>
<rect x="118" y="11" width="1" height="1" fill="#2b2b29"/>
<rect x="129" y="11" width="1" height="1" fill="#2b2b29"/>
<rect x="141" y="11" width="1" height="1" fill="#2b2b29"/>
<rect x="152" y="11" width="1" height="1" fill="#2b2b29"/>
<rect x="176" y="11" width="1" height="1" fill="#2b2b29"/>
<rect x="187" y="11" width="1" height="1" fill="#2b2b29"/>
<rect x="199" y="11" width="1" height="1" fill="#2b2b29"/>
<rect x="210" y="11" width="1" height="1" fill="#2b2b29"/>
<rect x="222" y="10" width="1" height="4" fill="#2b2b29"/>
<rect x="233" y="11" width="1" height="1" fill="#2b2b29"/>
<rect x="245" y="11" width="1" height="1" fill="#2b2b29"/>
<rect x="256" y="11" width="1" height="1" fill="#2b2b29"/>
<rect x="268" y="11" width="1" height="1" fill="#2b2b29"/>
<rect x="291" y="11" width="1" height="1" fill="#2b2b29"/>
<rect x="302" y="11" width="1" height="1" fill="#2b2b29"/>
<rect x="314" y="11" width="1" height="1" fill="#2b2b29"/>
<rect x="325" y="11" width="1" height="1" fill="#2b2b29"/>
<rect x="337" y="10" width="1" height="4" fill="#2b2b29"/>
<rect x="348" y="11" width="1" height="1" fill="#2b2b29"/>
<rect x="360" y="11" width="1" height="1" fill="#2b2b29"/>
<rect x="371" y="11" width="1" height="1" fill="#2b2b29"/>
<rect x="383" y="11" width="1" height="1" fill="#2b2b29"/>
<rect x="406" y="11" width="1" height="1" fill="#2b2b29"/>
<rect x="417" y="11" width="1" height="1" fill="#2b2b29"/>
<rect x="429" y="11" width="1" height="1" fill="#2b2b29"/>
<rect x="440" y="11" width="1" height="1" fill="#2b2b29"/>
<rect x="452" y="10" width="1" height="4" fill="#2b2b29"/>
<rect x="464" y="11" width="1" height="1" fill="#2b2b29"/>
<rect x="475" y="11" width="1" height="1" fill="#2b2b29"/>
<rect x="487" y="11" width="1" height="1" fill="#2b2b29"/>
<rect x="498" y="11" width="1" height="1" fill="#2b2b29"/>
<rect x="521" y="11" width="1" height="1" fill="#2b2b29"/>
<rect x="533" y="11" width="1" height="1" fill="#2b2b29"/>
<rect x="544" y="11" width="1" height="1" fill="#2b2b29"/>
<rect x="556" y="11" width="1" height="1" fill="#2b2b29"/>
<rect x="567" y="10" width="1" height="4" fill="#2b2b29"/>
<rect x="579" y="11" width="1" height="1" fill="#2b2b29"/>
<rect x="590" y="11" width="1" height="1" fill="#2b2b29"/>
<rect x="602" y="11" width="1" height="1" fill="#2b2b29"/>
<rect x="613" y="11" width="1" height="1" fill="#2b2b29"/>
<rect x="636" y="11" width="1" height="1" fill="#2b2b29"/>
<rect x="648" y="11" width="1" height="1" fill="#2b2b29"/>
<rect x="659" y="11" width="1" height="1" fill="#2b2b29"/>
<rect x="671" y="11" width="1" height="1" fill="#2b2b29"/>
<rect x="682" y="10" width="1" height="4" fill="#2b2b29"/>
<rect x="694" y="11" width="1" height="1" fill="#2b2b29"/>
<rect x="705" y="11" width="1" height="1" fill="#2b2b29"/>
<rect x="717" y="11" width="1" height="1" fill="#2b2b29"/>
<rect x="728" y="11" width="1" height="1" fill="#2b2b29"/>
<rect x="752" y="11" width="1" height="1" fill="#2b2b29"/>
<rect x="763" y="11" width="1" height="1" fill="#2b2b29"/>
<rect x="775" y="11" width="1" height="1" fill="#2b2b29"/>
<rect x="786" y="11" width="1" height="1" fill="#2b2b29"/>
<rect x="798" y="10" width="1" height="4" fill="#2b2b29"/>
<rect x="809" y="11" width="1" height="1" fill="#2b2b29"/>
<rect x="821" y="11" width="1" height="1" fill="#2b2b29"/>
<rect x="832" y="11" width="1" height="1" fill="#2b2b29"/>
<rect x="844" y="11" width="1" height="1" fill="#2b2b29"/>
<rect x="867" y="11" width="1" height="1" fill="#2b2b29"/>
<rect x="878" y="11" width="1" height="1" fill="#2b2b29"/>
<rect x="890" y="11" width="1" height="1" fill="#2b2b29"/>
<rect x="901" y="11" width="1" height="1" fill="#2b2b29"/>
<rect x="913" y="10" width="1" height="4" fill="#2b2b29"/>
<rect x="924" y="11" width="1" height="1" fill="#2b2b29"/>
<rect x="936" y="11" width="1" height="1" fill="#2b2b29"/>
<rect x="947" y="11" width="1" height="1" fill="#2b2b29"/>
<rect x="959" y="11" width="1" height="1" fill="#2b2b29"/>
<rect x="982" y="11" width="1" height="1" fill="#2b2b29"/>
<rect x="993" y="11" width="1" height="1" fill="#2b2b29"/>
<rect x="1005" y="11" width="1" height="1" fill="#2b2b29"/>
<rect x="1016" y="11" width="1" height="1" fill="#2b2b29"/>
<rect x="1028" y="10" width="1" height="4" fill="#2b2b29"/>
<rect x="1040" y="11" width="1" height="1" fill="#2b2b29"/>
<rect x="392" y="14" width="1" height="3" fill="#2b2b29"/><rect x="390" y="17" width="5" height="1" fill="#2b2b29"/>
<rect x="449" y="14" width="1" height="3" fill="#2b2b29"/><rect x="447" y="17" width="5" height="1" fill="#2b2b29"/>
<rect x="506" y="14" width="1" height="3" fill="#2b2b29"/><rect x="504" y="17" width="5" height="1" fill="#2b2b29"/>
<rect x="563" y="14" width="1" height="3" fill="#2b2b29"/><rect x="561" y="17" width="5" height="1" fill="#2b2b29"/>
<rect x="620" y="14" width="1" height="3" fill="#2b2b29"/><rect x="618" y="17" width="5" height="1" fill="#2b2b29"/>
<rect x="677" y="14" width="1" height="3" fill="#2b2b29"/><rect x="675" y="17" width="5" height="1" fill="#2b2b29"/>
<rect x="734" y="14" width="1" height="3" fill="#2b2b29"/><rect x="732" y="17" width="5" height="1" fill="#2b2b29"/>
<rect x="791" y="14" width="1" height="3" fill="#2b2b29"/><rect x="789" y="17" width="5" height="1" fill="#2b2b29"/>
<rect x="848" y="14" width="1" height="3" fill="#2b2b29"/><rect x="846" y="17" width="5" height="1" fill="#2b2b29"/>
<rect x="905" y="14" width="1" height="3" fill="#2b2b29"/><rect x="903" y="17" width="5" height="1" fill="#2b2b29"/>
<path d="M339 12v5h5" stroke="#2b2b29" stroke-width="2" fill="none"/>
<g shape-rendering="geometricPrecision"><path d="M160 4h9.500l-4.750 7zM160 18.500h9.500l-4.750 -7z" fill="#fff" stroke="#111" stroke-width="1.700" stroke-linejoin="miter"/>
<path d="M963.500 3v9" stroke="#111" stroke-width="1.300"/><path d="M958.500 18.500h10l-5 -7.500z" fill="#fff" stroke="#111" stroke-width="1.700"/></g>
</svg>
<div class="abs rn" style="left:275.2px">1</div>
<div class="abs rn" style="left:390.4px">2</div>
<div class="abs rn" style="left:505.6px">3</div>
<div class="abs rn" style="left:620.8px">4</div>
<div class="abs rn" style="left:736.0px">5</div>
<div class="abs rn" style="left:851.2px">6</div>
<div class="abs rn" style="left:966.4px">7</div></div>
  <div id="wdoc" class="abs"><div class="abs frameT"></div><div class="abs frameL"></div>
<div class="abs page"></div>
<div id="vr" class="abs"><div class="abs mb"></div><svg class="abs" style="left:0;top:-1px" width="16" height="289" shape-rendering="crispEdges" fill="#2b2b29"><rect x="8" y="7" width="1" height="1"/><rect x="8" y="30" width="1" height="1"/><rect x="8" y="41" width="1" height="1"/><rect x="8" y="53" width="1" height="1"/><rect x="8" y="64" width="1" height="1"/><rect x="6" y="76" width="4" height="1"/><rect x="8" y="87" width="1" height="1"/><rect x="8" y="99" width="1" height="1"/><rect x="8" y="110" width="1" height="1"/><rect x="8" y="122" width="1" height="1"/><rect x="8" y="145" width="1" height="1"/><rect x="8" y="156" width="1" height="1"/><rect x="8" y="168" width="1" height="1"/><rect x="8" y="180" width="1" height="1"/><rect x="6" y="191" width="4" height="1"/><rect x="8" y="203" width="1" height="1"/><rect x="8" y="214" width="1" height="1"/><rect x="8" y="226" width="1" height="1"/><rect x="8" y="237" width="1" height="1"/><rect x="8" y="260" width="1" height="1"/><rect x="8" y="272" width="1" height="1"/><rect x="8" y="283" width="1" height="1"/></svg><div class="abs" style="left:1px;top:123.6px;width:14px;height:14px;font-size:11.5px;line-height:14px;text-align:center;color:#3c3b37;transform:rotate(-90deg)">1</div><div class="abs" style="left:1px;top:238.8px;width:14px;height:14px;font-size:11.5px;line-height:14px;text-align:center;color:#3c3b37;transform:rotate(-90deg)">2</div></div>
<div class="abs tf" style="left:164px;top:19px;width:798px;height:300px"></div>
<div class="wt sans" style="top:17.85px;font-size:19.2px;line-height:23px;left:165px;">$school_name: $school_year</div>
<div class="wt sans" style="top:17.85px;font-size:19.2px;line-height:23px;right:154.5px;">$date</div>
<div class="wt sans" style="top:39.74px;font-size:22.4px;line-height:27px;left:416px;font-weight:bold;">Individual Discipline Report</div>
<div class="wt sans" style="top:65.85px;font-size:19.2px;line-height:23px;left:165px;">$student</div>
<div class="wt sans" style="top:87.85px;font-size:19.2px;line-height:23px;left:165px;">$student_year</div>
<div class="wt serif" style="top:131.72px;font-size:19.2px;line-height:23px;left:165.5px;">Total Penalties:</div>
<div class="wt serif" style="top:131.72px;font-size:19.2px;line-height:23px;left:339.5px;">$total_jug</div>
<div class="wt serif" style="top:154.02px;font-size:19.2px;line-height:23px;left:165.5px;">Total Incidents:</div>
<div class="wt serif" style="top:154.02px;font-size:19.2px;line-height:23px;left:339.5px;">$total_disc</div>
<div class="bl" style="left:164px;top:198px;width:799px;height:1.3px"></div>
<div class="bl" style="left:164px;top:229px;width:799px;height:1.3px"></div>
<div class="bl" style="left:164px;top:260px;width:799px;height:1.3px"></div>
<div class="bl" style="left:164px;top:198px;width:1.3px;height:63px"></div>
<div class="bl" style="left:285px;top:198px;width:1.3px;height:63px"></div>
<div class="bl" style="left:526px;top:198px;width:1.3px;height:63px"></div>
<div class="bl" style="left:687px;top:198px;width:1.3px;height:63px"></div>
<div class="bl" style="left:962px;top:198px;width:1.3px;height:63px"></div>
<div class="wt serif" style="top:202.72px;font-size:19.2px;line-height:23px;left:169.5px;font-weight:bold;">Date</div>
<div class="wt serif" style="top:202.72px;font-size:19.2px;line-height:23px;left:290.5px;font-weight:bold;">Incident</div>
<div class="wt serif" style="top:202.72px;font-size:19.2px;line-height:23px;left:531.5px;font-weight:bold;">Teacher</div>
<div class="wt serif" style="top:202.72px;font-size:19.2px;line-height:23px;left:692.5px;font-weight:bold;">Comments</div>
<div class="wt serif" style="top:233.52px;font-size:19.2px;line-height:23px;left:169.5px;">$disc_date</div>
<div class="wt serif" style="top:233.52px;font-size:19.2px;line-height:23px;left:290.5px;">$disc_infraction</div>
<div class="wt serif" style="top:233.52px;font-size:19.2px;line-height:23px;left:531.5px;">$disc_teacher</div>
<div class="wt serif" style="top:233.52px;font-size:19.2px;line-height:23px;left:692.5px;">$disc_comment</div></div>
  <div id="wsb" class="abs">
    <div class="abs" style="left:1px;top:2px;width:15px;height:257px;border:1px solid #c9c7c3;border-radius:7px;background:#d8d6d3"></div>
    <div class="abs" style="left:1px;top:2px;width:15px;height:14px;border:1px solid #c9c7c3;border-bottom:0;border-radius:7px 7px 0 0;background:#f6f5f4"></div>
    <div class="abs" style="left:4px;top:6px;width:0;height:0;border-left:4px solid transparent;border-right:4px solid transparent;border-bottom:4px solid #6f6e6a"></div>
    <div class="abs" style="left:1px;top:33px;width:15px;height:51px;border:1px solid #a9a7a2;border-radius:6px;background:linear-gradient(90deg,#fbfbfa,#e9e8e6)"></div>
    <div class="abs" style="left:6px;top:55px;width:5px;height:7px;background:repeating-linear-gradient(180deg,#a3a19c 0,#a3a19c 1px,transparent 1px,transparent 3px)"></div>
    <div class="abs" style="left:1px;top:258px;width:15px;height:13px;border:1px solid #c9c7c3;border-top:0;border-radius:0 0 7px 7px;background:#f6f5f4"></div>
    <div class="abs" style="left:4px;top:262px;width:0;height:0;border-left:4px solid transparent;border-right:4px solid transparent;border-top:4px solid #6f6e6a"></div>
    <div class="abs" style="left:1px;top:271px;width:15px;height:40px;background:#d8d6d3"></div>
    <div class="abs" style="left:2px;top:272px;width:13px;height:11px;border:1px solid #a9a7a2;border-radius:5px;background:#efeeec"></div>
    <div class="abs" style="left:2px;top:286px;width:13px;height:11px;border:1px solid #a9a7a2;border-radius:5px;background:#efeeec"></div>
    <div class="abs" style="left:2px;top:299px;width:13px;height:11px;border:1px solid #a9a7a2;border-radius:5px;background:#efeeec"></div>
    <svg class="abs" style="left:5px;top:274px" width="8" height="34" viewBox="0 0 8 34"><path d="M1.500 3.500l2.500-2.500 2.500 2.500zM1.500 7l2.500-2.500 2.500 2.500z" fill="#222"/><path d="M2 21c1-3 2.500-3.500 4.500-3.500l-1 1.500 1.500 0-1 2z" fill="#2f62a8"/><path d="M1.500 28l2.500 2.500 2.500-2.500zM1.500 31.500l2.500 2.500 2.500-2.500z" fill="#222"/></svg>
  </div>
  <div id="wstatus" class="abs">
    <div class="abs" style="left:3px;top:3px;width:400px;height:18px;border:1px solid #2f2e2b;background:#f2f1f0"></div>
    <div class="abs nw" style="left:8.500px;top:6px;font-size:11.800px;line-height:14px;color:#3c3b37">Page 1 / 1</div>
    <div class="abs" style="left:1062px;top:3px;width:49px;height:18px;border:1px solid #2f2e2b;background:#f7f6f5"></div>
    <div class="abs nw" style="left:1067px;top:5px;font-size:12.500px;line-height:15px;color:#3c3b37;width:40.500px;text-align:right">120%</div>
  </div>
</div>

<!-- ================= PDF WINDOW ================= -->
<div class="abs" style="left:21px;top:433px;width:1px;height:571px;background:linear-gradient(180deg,#3c3b37 0,#3c3b37 50px,#a9a6a0 50px,#a9a6a0 100%)"></div>
<div class="abs" style="left:1101px;top:433px;width:1px;height:571px;background:linear-gradient(180deg,#3c3b37 0,#3c3b37 50px,#8e8b85 50px,#8e8b85 100%)"></div>
<div id="pdf" class="abs">
  <div id="ptitle" class="abs">
    <div class="abs" style="left:12.500px;top:5px;width:50px;height:18px;border-radius:9px;background:#34332f;box-shadow:inset 0 1px 1px rgba(0,0,0,.35),0 1px 0 rgba(255,255,255,.06)"></div>
    <svg class="abs" style="left:8px;top:4px" width="58" height="20" viewBox="0 0 58 20">
      <defs><linearGradient id="gc" x1="0" y1="0" x2="0" y2="1"><stop offset="0" stop-color="#f27648"/><stop offset="1" stop-color="#e0500f"/></linearGradient>
      <linearGradient id="gg" x1="0" y1="0" x2="0" y2="1"><stop offset="0" stop-color="#85837c"/><stop offset="1" stop-color="#5f5d57"/></linearGradient></defs>
      <circle cx="10.5" cy="10" r="7.800" fill="url(#gc)" stroke="#2f2e2a" stroke-width="1"/>
      <circle cx="28.5" cy="10" r="7.800" fill="url(#gg)" stroke="#2f2e2a" stroke-width="1"/>
      <circle cx="46.5" cy="10" r="7.800" fill="url(#gg)" stroke="#2f2e2a" stroke-width="1"/>
      <g stroke="#3a2015" stroke-width="1.150" fill="none"><path d="M7.8 7.3l5.4 5.4M13.2 7.3l-5.4 5.4"/></g>
      <g stroke="#33322e" stroke-width="1.150" fill="none"><path d="M25 10h7"/><rect x="43.5" y="7" width="6" height="6"/></g>
    </svg>
    <div class="abs nw" style="left:75px;top:6px;font-size:14.8px;font-weight:bold;line-height:18px;color:#dfdbd2">disc_report (4).pdf</div>
  </div>
  <div id="pmenu" class="abs">
    <div class="abs nw pm" style="left:8px">File</div>
    <div class="abs nw pm" style="left:46px">Edit</div>
    <div class="abs nw pm" style="left:87px">View</div>
    <div class="abs nw pm" style="left:134px">Go</div>
    <div class="abs nw pm" style="left:167px">Help</div>
  </div>
  <div id="ptool" class="abs">
    <svg class="abs" style="left:9px;top:8px" width="20" height="24" viewBox="0 0 20 24"><path d="M10 20.500V4.500M3.800 10.200L10 3.500l6.200 6.700" fill="none" stroke="#cfcdc9" stroke-width="4.600" stroke-linecap="round" stroke-linejoin="round"/><path d="M10 20.500V4.500M3.800 10.200L10 3.500l6.200 6.700" fill="none" stroke="#e0deda" stroke-width="2.600" stroke-linecap="round" stroke-linejoin="round"/></svg>
    <div class="pt" style="left:33.500px;color:#a9a7a2;letter-spacing:.3px">Previous</div>
    <svg class="abs" style="left:106px;top:8px" width="20" height="24" viewBox="0 0 20 24"><path d="M10 3.500V19.500M3.800 13.800L10 20.500l6.200-6.700" fill="none" stroke="#cfcdc9" stroke-width="4.600" stroke-linecap="round" stroke-linejoin="round"/><path d="M10 3.500V19.500M3.800 13.800L10 20.500l6.200-6.700" fill="none" stroke="#e0deda" stroke-width="2.600" stroke-linecap="round" stroke-linejoin="round"/></svg>
    <div class="pt" style="left:130.500px;color:#a9a7a2;letter-spacing:1px">Next</div>
    <div class="abs" style="left:175px;top:8px;width:1px;height:21px;background:#dddbd7"></div>
    <div class="abs" style="left:189px;top:8px;width:56px;height:25px;background:#fff;border:1px solid #a9a7a2;border-radius:4px;box-shadow:inset 0 1px 1px #e4e3e0"></div>
    <div class="pt" style="left:194px;color:#3c3b37">1</div>
    <div class="pt" style="left:251.500px;color:#3c3b37;letter-spacing:.3px">(1 of 1)</div>
    <div class="abs" style="left:310px;top:8px;width:1px;height:21px;background:#dddbd7"></div>
    <div class="abs" style="left:318px;top:6px;width:136px;height:28px;background:linear-gradient(180deg,#fdfdfc,#e9e8e6);border:1px solid #a9a7a2;border-radius:4px"></div>
    <div class="pt" style="left:325px;color:#3c3b37">150%</div>
    <div class="abs" style="left:437px;top:19px;width:0;height:0;border-left:4px solid transparent;border-right:4px solid transparent;border-top:5px solid #6b6a66"></div>
  </div>
  <div id="pview" class="abs"><div class="pp sans" style="left:93.5px;top:46.26px;font-size:21px;line-height:25px;">Cristo Rey New York High School: year 1</div>
<div class="pp sans" style="left:850.0px;top:46.26px;font-size:21px;line-height:25px;">2010-10-12</div>
<div class="pp sans" style="left:367.5px;top:69.75px;font-size:24.5px;line-height:29px;font-weight:bold;">Individual Discipline Report</div>
<div class="pp sans" style="left:93.5px;top:98.26px;font-size:21px;line-height:25px;">John Conner</div>
<div class="pp sans" style="left:93.5px;top:122.26px;font-size:21px;line-height:25px;">Freshman</div>
<div class="pp serif" style="left:94.5px;top:171.21px;font-size:21px;line-height:25px;">Total Penalties:</div>
<div class="pp serif" style="left:283.5px;top:171.21px;font-size:21px;line-height:25px;">1</div>
<div class="pp serif" style="left:94.5px;top:195.11px;font-size:21px;line-height:25px;">Total Incidents:</div>
<div class="pp serif" style="left:283.5px;top:195.11px;font-size:21px;line-height:25px;">1</div>
<div class="gl" style="left:93px;top:242px;width:872px;height:1px"></div>
<div class="gl" style="left:93px;top:276px;width:872px;height:1px"></div>
<div class="gl" style="left:93px;top:309px;width:872px;height:1px"></div>
<div class="gl" style="left:93px;top:343px;width:872px;height:1px"></div>
<div class="gl" style="left:93px;top:242px;width:1px;height:102px"></div>
<div class="gl" style="left:225px;top:242px;width:1px;height:102px"></div>
<div class="gl" style="left:488px;top:242px;width:1px;height:102px"></div>
<div class="gl" style="left:664px;top:242px;width:1px;height:102px"></div>
<div class="gl" style="left:964px;top:242px;width:1px;height:102px"></div>
<div class="pp serif" style="left:99.0px;top:247.51px;font-size:21px;line-height:25px;font-weight:bold;">Date</div>
<div class="pp serif" style="left:231.0px;top:247.51px;font-size:21px;line-height:25px;font-weight:bold;">Incident</div>
<div class="pp serif" style="left:494.5px;top:247.51px;font-size:21px;line-height:25px;font-weight:bold;">Teacher</div>
<div class="pp serif" style="left:669.5px;top:247.51px;font-size:21px;line-height:25px;font-weight:bold;">Comments</div>
<div class="pp serif" style="left:99.0px;top:281.61px;font-size:21px;line-height:25px;">2010-10-06</div>
<div class="pp serif" style="left:231.0px;top:281.61px;font-size:21px;line-height:25px;">Case note</div>
<div class="pp serif" style="left:494.5px;top:281.61px;font-size:21px;line-height:25px;">None</div>
<div class="pp serif" style="left:669.5px;top:281.61px;font-size:21px;line-height:25px;">gdfgfdgdfg</div>
<div class="pp serif" style="left:99.0px;top:315.21px;font-size:21px;line-height:25px;">2010-10-04</div>
<div class="pp serif" style="left:231.0px;top:315.21px;font-size:21px;line-height:25px;">Is a jerk</div>
<div class="pp serif" style="left:494.5px;top:315.21px;font-size:21px;line-height:25px;">None</div>
<div class="pp serif" style="left:669.5px;top:315.21px;font-size:21px;line-height:25px;">Blah blah blah blah blah blah</div></div>
  <div id="pvs" class="abs">
    <div class="abs" style="left:-1px;top:12px;width:13px;height:438px;border:1px solid #c4c1bb;border-radius:6px;background:linear-gradient(90deg,#d2d0cc,#e3e1de)"></div>
    <div class="abs" style="left:2px;top:5px;width:0;height:0;border-left:3.500px solid transparent;border-right:3.500px solid transparent;border-bottom:4px solid #6f6e6a"></div>
    <div class="abs" style="left:-1px;top:30px;width:13px;height:144px;border:1px solid #aeaba5;border-radius:6px;background:linear-gradient(90deg,#fdfdfc,#eceae8)"></div>
    <div class="abs" style="left:3px;top:98px;width:5px;height:8px;background:repeating-linear-gradient(180deg,#b7b5b0 0,#b7b5b0 1px,transparent 1px,transparent 3px)"></div>
        <div class="abs" style="left:2px;top:453px;width:0;height:0;border-left:3.500px solid transparent;border-right:3.500px solid transparent;border-top:4px solid #6f6e6a"></div>
  </div>
  <div class="abs" style="left:0;top:574px;width:1079px;height:1px;background:#bdbab4"></div>
  <div id="phs" class="abs">
    <div class="abs" style="left:11px;top:-1px;width:1038px;height:13px;border:1px solid #c4c1bb;border-radius:6px;background:linear-gradient(180deg,#d2d0cc,#e3e1de)"></div>
    <div class="abs" style="left:4px;top:2px;width:0;height:0;border-top:3.500px solid transparent;border-bottom:3.500px solid transparent;border-right:4px solid #6f6e6a"></div>
    <div class="abs" style="left:22px;top:-1px;width:1016px;height:13px;border:1px solid #aeaba5;border-radius:6px;background:linear-gradient(180deg,#fdfdfc,#eceae8)"></div>
    <div class="abs" style="left:522px;top:3px;width:8px;height:5px;background:repeating-linear-gradient(90deg,#b7b5b0 0,#b7b5b0 1px,transparent 1px,transparent 3px)"></div>
        <div class="abs" style="left:1053px;top:2px;width:0;height:0;border-top:3.500px solid transparent;border-bottom:3.500px solid transparent;border-left:4px solid #6f6e6a"></div>
  </div>
</div>
</body>
</html>
